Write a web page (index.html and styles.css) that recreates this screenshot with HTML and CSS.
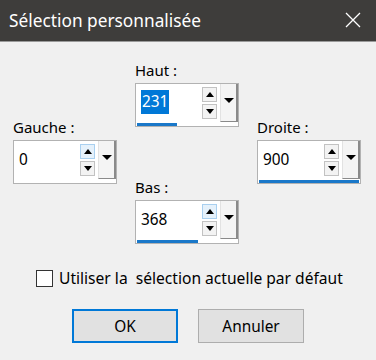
FILE: index.html
```html
<!DOCTYPE html>
<html lang="fr">
<head>
    <meta charset="UTF-8">
    <meta name="viewport" content="width=device-width, initial-scale=1.0">
    <title>Sélection personnalisée</title>
    <link rel="stylesheet" href="styles.css">
</head>
<body>

    <div class="dialog">
        <div class="titlebar">
            <span class="title">Sélection personnalisée</span>
            <svg class="close" width="16" height="16" viewBox="0 0 16 16">
                <path d="M1 1 L15 15 M15 1 L1 15" stroke="#fff" stroke-width="1.3" fill="none"/>
            </svg>
        </div>

        <div class="content">
            <div class="fields">
                <div class="col side">
                    <div class="field">
                        <div class="label">Gauche :</div>
                        <div class="spin">
                            <div class="spin-row">
                                <span class="value">0</span>
                                <div class="arrows">
                                    <span class="arrow up hover"></span>
                                    <span class="arrow down"></span>
                                </div>
                                <span class="drop"></span>
                            </div>
                            <div class="track"><div class="bar" style="width: 0%"></div></div>
                        </div>
                    </div>
                </div>

                <div class="col middle">
                    <div class="field">
                        <div class="label">Haut :</div>
                        <div class="spin">
                            <div class="spin-row">
                                <span class="value"><span class="selected">231</span></span>
                                <div class="arrows">
                                    <span class="arrow up"></span>
                                    <span class="arrow down"></span>
                                </div>
                                <span class="drop"></span>
                            </div>
                            <div class="track"><div class="bar" style="width: 40%"></div></div>
                        </div>
                    </div>

                    <div class="field lower">
                        <div class="label">Bas :</div>
                        <div class="spin">
                            <div class="spin-row">
                                <span class="value">368</span>
                                <div class="arrows">
                                    <span class="arrow up hover"></span>
                                    <span class="arrow down"></span>
                                </div>
                                <span class="drop"></span>
                            </div>
                            <div class="track"><div class="bar" style="width: 61%"></div></div>
                        </div>
                    </div>
                </div>

                <div class="col side">
                    <div class="field">
                        <div class="label">Droite :</div>
                        <div class="spin">
                            <div class="spin-row">
                                <span class="value">900</span>
                                <div class="arrows">
                                    <span class="arrow up"></span>
                                    <span class="arrow down"></span>
                                </div>
                                <span class="drop"></span>
                            </div>
                            <div class="track"><div class="bar" style="width: 100%"></div></div>
                        </div>
                    </div>
                </div>
            </div>

            <label class="check">
                <span class="checkbox"></span>
                <span>Utiliser la&nbsp; sélection actuelle par défaut</span>
            </label>

            <div class="buttons">
                <button class="btn default">OK</button>
                <button class="btn">Annuler</button>
            </div>
        </div>
    </div>

</body>
</html>
```

FILE: styles.css
```css
body {
    margin: 0;
    padding: 0;
    font-family: 'Noto Sans', 'Open Sans', sans-serif;
    background: #f0f0f0;
    color: #000;
}

.dialog {
    width: 376px;
    height: 360px;
    background: #f0f0f0;
}

.titlebar {
    height: 42px;
    background: #3e3d3b;
    border-bottom: 1px solid #9a9a9a;
    box-sizing: border-box;
    display: flex;
    align-items: center;
    justify-content: space-between;
    padding: 0 15px 0 9px;
}

.title {
    color: #fff;
    font-size: 17.3px;
    margin-top: -1px;
}

.close {
    display: block;
    margin-top: -1px;
}

.content {
    padding: 18px 0 0 13px;
}

.fields {
    display: flex;
    gap: 18px;
    align-items: flex-start;
}

.col {
    width: 104px;
}

.side {
    margin-top: 57px;
}

.field.lower {
    margin-top: 50px;
}

.label {
    font-size: 15px;
    line-height: 20px;
    height: 20px;
    margin-bottom: 3px;
}

.spin {
    height: 44px;
    box-sizing: border-box;
    background: #fff;
    border: 1px solid #b2b2b2;
    display: flex;
    flex-direction: column;
}

.spin-row {
    height: 38px;
    display: flex;
}

.value {
    flex: 1;
    display: flex;
    align-items: center;
    padding-left: 5px;
    font-size: 15.4px;
    margin-top: -2px;
}

.selected {
    background: #0078d7;
    color: #fff;
    line-height: 24px;
    padding: 0 1px;
}

.arrows {
    width: 15px;
    margin-top: 3px;
    display: flex;
    flex-direction: column;
    gap: 2px;
}

.arrow {
    height: 15px;
    box-sizing: border-box;
    border: 1px solid #c2c2c2;
    background: #f3f3f3;
    display: flex;
    align-items: center;
    justify-content: center;
}

.arrow.hover {
    background: #e5f1fb;
    border-color: #a9d0f0;
}

.arrow::after {
    content: "";
    width: 0;
    height: 0;
    border-left: 4px solid transparent;
    border-right: 4px solid transparent;
}

.arrow.up::after {
    border-bottom: 5px solid #000;
}

.arrow.down::after {
    border-top: 5px solid #000;
}

.drop {
    width: 18px;
    margin-left: 3px;
    box-sizing: border-box;
    background: #f4f4f4;
    border-left: 1px solid #e2e2e2;
    border-right: 2px solid #8a8a8a;
    border-bottom: 1px solid #8a8a8a;
    display: flex;
    align-items: center;
    justify-content: center;
}

.drop::after {
    content: "";
    width: 0;
    height: 0;
    border-left: 5px solid transparent;
    border-right: 5px solid transparent;
    border-top: 5px solid #000;
    margin-top: -4px;
}

.track {
    height: 3px;
    margin: 1px 1px 0;
}

.bar {
    height: 100%;
    background: #1a78c9;
}

.check {
    display: flex;
    align-items: center;
    height: 20px;
    margin: 24px 0 0 23px;
    font-size: 15.6px;
    gap: 6px;
}

.checkbox {
    width: 17px;
    height: 17px;
    box-sizing: border-box;
    border: 1px solid #333;
    background: #fff;
}

.buttons {
    display: flex;
    gap: 20px;
    margin: 21px 0 0 59px;
}

.btn {
    width: 106px;
    height: 34px;
    box-sizing: border-box;
    font-family: 'Noto Sans', 'Open Sans', sans-serif;
    font-size: 15.4px;
    color: #000;
    background: #e1e1e1;
    border: 1px solid #adadad;
    padding: 0;
}

.btn.default {
    border: 2px solid #0078d7;
}
```
